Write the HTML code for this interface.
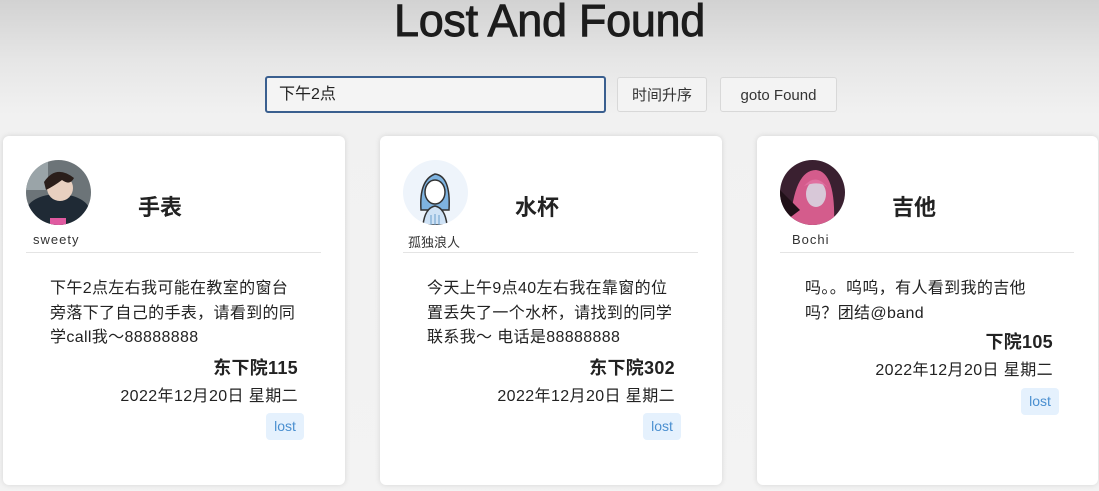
<!DOCTYPE html>
<html><head><meta charset="utf-8">
<style>
*{box-sizing:border-box;margin:0;padding:0}
body{width:1099px;height:491px;overflow:hidden;font-family:"Liberation Sans","Noto Sans CJK SC",sans-serif;color:#222;
background:linear-gradient(#d2d2d2 0px,#e6e6e6 60px,#f1f1f1 115px,#f3f3f3 491px);position:relative}
h1{position:absolute;left:0;width:1099px;top:-5px;text-align:center;font-size:45px;font-weight:normal;-webkit-text-stroke:0.9px #1c1c1c;color:#1c1c1c;letter-spacing:-0.3px}
.inp{position:absolute;left:265px;top:76px;width:341px;height:37px;border:2px solid #3a5f8f;border-radius:3px;background:#f4f4f4;font-size:16px;padding:0 12px;line-height:33px;color:#222}
.btn{position:absolute;top:77px;height:35px;border:1px solid #d8d8d8;border-radius:3px;background:#f3f3f3;font-size:15px;color:#333;text-align:center;line-height:35px}
.card{position:absolute;top:136px;width:342px;height:349px;background:#fff;border-radius:6px;box-shadow:0 0 6px rgba(0,0,0,.12)}
.av{position:absolute;left:23px;top:24px;width:65px;height:65px;border-radius:50%;overflow:hidden}
.name{position:absolute;top:96px;font-size:13px;color:#333;letter-spacing:1px}
.title{position:absolute;width:110px;text-align:center;top:54px;font-size:22px;font-weight:bold;color:#222}
.hr{position:absolute;left:23px;right:24px;top:116px;border-top:1px solid #e4e4e4}
.body{position:absolute;left:47px;top:141px;font-size:16px;line-height:24.5px;color:#222;white-space:nowrap;letter-spacing:0.35px}
.loc{position:absolute;right:47px;top:218px;font-size:18px;font-weight:bold;color:#222;letter-spacing:0.3px}
.date{position:absolute;right:47px;top:246px;font-size:16px;color:#222;letter-spacing:0.4px}
.tag{position:absolute;width:38px;height:27px;border-radius:4px;background:#e5f1fd;color:#4a8fd0;font-size:14px;text-align:center;line-height:27px}
</style></head><body>
<h1>Lost And Found</h1>
<div class="inp">下午2点</div>
<div class="btn" style="left:617px;width:90px">时间升序</div>
<div class="btn" style="left:720px;width:117px">goto Found</div>

<div class="card" style="left:3px">
  <div class="av"><svg width="65" height="65"><rect width="65" height="65" fill="#6c7478"/><rect x="0" y="0" width="22" height="30" fill="#9aa4a8"/><ellipse cx="32" cy="52" rx="32" ry="18" fill="#1f2a35"/><circle cx="34" cy="28" r="13" fill="#e8d0c0"/><path d="M18 22 Q30 4 48 18 Q44 26 36 20 Q28 26 20 30Z" fill="#2a1e1a"/><rect x="24" y="58" width="16" height="7" fill="#e05aa0"/></svg></div>
  <div class="name" style="left:30px">sweety</div>
  <div class="title" style="left:102px">手表</div>
  <div class="hr"></div>
  <div class="body">下午2点左右我可能在教室的窗台<br>旁落下了自己的手表，请看到的同<br>学call我～88888888</div>
  <div class="loc">东下院115</div>
  <div class="date">2022年12月20日 星期二</div>
  <div class="tag" style="left:263px;top:277px">lost</div>
</div>

<div class="card" style="left:380px">
  <div class="av"><svg width="65" height="65"><rect width="65" height="65" fill="#eef4fb"/><path d="M18 50 Q16 20 32 14 Q48 16 46 50Z" fill="#7eb3e0" stroke="#333" stroke-width="1.5"/><ellipse cx="32" cy="32" rx="10" ry="12" fill="#fff" stroke="#333" stroke-width="1.5"/><path d="M20 65 Q22 48 32 46 Q42 48 44 65Z" fill="#cfe2f5" stroke="#333" stroke-width="1.5"/><path d="M28 55v10M32 54v11M36 55v10" stroke="#6a9dcc"/></svg></div>
  <div class="name" style="left:28px;letter-spacing:0">孤独浪人</div>
  <div class="title" style="left:102px">水杯</div>
  <div class="hr"></div>
  <div class="body">今天上午9点40左右我在靠窗的位<br>置丢失了一个水杯，请找到的同学<br>联系我～ 电话是88888888</div>
  <div class="loc">东下院302</div>
  <div class="date">2022年12月20日 星期二</div>
  <div class="tag" style="left:263px;top:277px">lost</div>
</div>

<div class="card" style="left:757px;width:341px">
  <div class="av"><svg width="65" height="65"><rect width="65" height="65" fill="#3a2030"/><path d="M10 65 Q14 10 36 10 Q56 12 54 65Z" fill="#d45c8c"/><ellipse cx="36" cy="34" rx="10" ry="13" fill="#d8c8d8"/><path d="M24 26 Q36 12 48 28 Q40 20 24 26Z" fill="#e070a0"/><path d="M0 30 L20 50 L0 65Z" fill="#201018"/></svg></div>
  <div class="name" style="left:35px">Bochi</div>
  <div class="title" style="left:102px">吉他</div>
  <div class="hr"></div>
  <div class="body" style="left:48px">吗。。呜呜，有人看到我的吉他<br>吗？团结@band</div>
  <div class="loc" style="right:45px;top:192px">下院105</div>
  <div class="date" style="right:45px;top:220px">2022年12月20日 星期二</div>
  <div class="tag" style="left:264px;top:252px">lost</div>
</div>
</body></html>
